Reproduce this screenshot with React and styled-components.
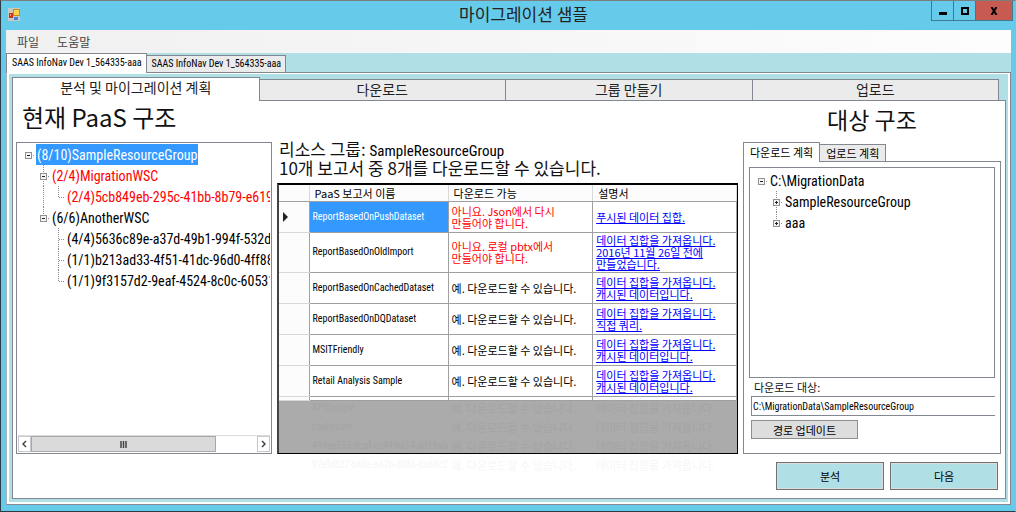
import React from 'react';
import styled, { createGlobalStyle } from 'styled-components';

const KR = '"Noto Sans CJK KR", sans-serif';
const LATIN = '"Roboto Condensed", Roboto, "Noto Sans CJK KR", sans-serif';
const POWDER = '#b0e0e6';
const LINE = '#828790';

const GlobalStyle = createGlobalStyle`
  * { box-sizing: border-box; }
  body { margin: 0; background: #fff; }
  button, input { font: inherit; color: inherit; margin: 0; padding: 0; }
  button { cursor: pointer; }
  h1, h2, p, ul { margin: 0; padding: 0; font-weight: 400; }
  ul { list-style: none; }
`;

const Frame = styled.div`
  min-height: 100vh;
  display: flex;
  flex-direction: column;
  background: #66cbea;
  border: 1px solid #2b3a44;
  border-top-color: #7d7d7d;
  border-right-color: #66cbea;
  font-family: ${KR};
  color: #222;
`;

const TitleBar = styled.header`
  display: grid;
  grid-template-columns: 1fr auto 1fr;
  height: 29px;
  padding: 0 2px 0 7px;
`;

const AppIcon = styled.svg`
  margin-top: 7px;
`;

const Title = styled.h1`
  padding: 1px 0 0 26px;
  font-size: 17px;
  line-height: 24px;
`;

const WindowButtons = styled.div`
  display: flex;
  justify-content: flex-end;
  align-items: flex-start;
`;

const WindowButton = styled.button`
  width: ${(p) => (p.$close ? 38 : 23)}px;
  height: 20px;
  border: 1px solid #3d7a8d;
  border-top: 0;
  margin-left: -1px;
  background: ${(p) => (p.$close ? '#c75b52' : 'transparent')};
  display: flex;
  align-items: center;
  justify-content: center;
`;

const Client = styled.div`
  flex: 1;
  display: flex;
  flex-direction: column;
  margin: 0 4px 6px 5px;
`;

const MenuBar = styled.nav`
  display: flex;
  gap: 18px;
  height: 23px;
  padding-left: 11px;
  background: linear-gradient(90deg, #f0f0f0, #fdfdfd);
  color: #444;
`;

const MenuItem = styled.button`
  border: 0;
  background: none;
  font-size: 12px;
  line-height: 20px;
`;

const FileTabs = styled.div`
  display: flex;
  align-items: flex-end;
  height: 19px;
  background: ${POWDER};
`;

const FileTab = styled.button`
  position: relative;
  z-index: 1;
  height: ${(p) => (p.$active ? 20 : 17)}px;
  margin-bottom: ${(p) => (p.$active ? -1 : 0)}px;
  padding: 0 4px ${(p) => (p.$active ? 2 : 0)}px 5px;
  border: 1px solid ${LINE};
  border-bottom: 0;
  border-left-width: ${(p) => (p.$active ? 1 : 0)}px;
  background: ${(p) => (p.$active ? '#fff' : '#ebebeb')};
  font-family: ${LATIN};
  font-size: 10px;
  line-height: 16px;
  color: #000;
  white-space: nowrap;
`;

const FilePane = styled.div`
  flex: 1;
  display: flex;
  flex-direction: column;
  border: 1px solid ${LINE};
  border-left-color: #a9b4ba;
  padding: 1px 2px 2px;
  background: #fff;
`;

const Inset = styled.div`
  flex: 1;
  display: flex;
  flex-direction: column;
  padding: 3px 2px 3px 3px;
  background: ${POWDER};
`;

const StepTabs = styled.div`
  display: flex;
  align-items: flex-end;
  height: 23px;
  padding-right: 7px;
`;

const StepTab = styled.button`
  position: relative;
  z-index: 1;
  flex: 1;
  height: ${(p) => (p.$active ? 24 : 21)}px;
  margin-bottom: ${(p) => (p.$active ? -1 : 0)}px;
  padding-bottom: ${(p) => (p.$active ? 6 : 2)}px;
  border: 1px solid ${LINE};
  border-bottom: 0;
  border-left-width: ${(p) => (p.$active ? 1 : 0)}px;
  background: ${(p) => (p.$active ? '#fff' : '#ebebeb')};
  font-size: 14px;
  line-height: 18px;
`;

const StepPane = styled.main`
  flex: 1;
  display: flex;
  flex-direction: column;
  padding: 0 4px 8px 3px;
  border: 1px solid ${LINE};
  background: #fff;
`;

const Columns = styled.div`
  flex: 1;
  display: grid;
  grid-template-columns: minmax(0, 256fr) minmax(0, 461fr) minmax(0, 258fr);
  gap: 5px;
`;

const Column = styled.section`
  display: flex;
  flex-direction: column;
  min-width: 0;
`;

const Heading = styled.h2`
  height: 41px;
  padding-left: ${(p) => (p.$center ? 0 : 6)}px;
  padding-top: ${(p) => (p.$center ? 3 : 0)}px;
  font-size: ${(p) => (p.$center ? 23 : 24)}px;
  line-height: 31px;
  text-align: ${(p) => (p.$center ? 'center' : 'left')};
  white-space: nowrap;
  color: #111;
`;

const TreeBox = styled.div`
  flex: 1;
  display: flex;
  flex-direction: column;
  justify-content: space-between;
  min-height: 211px;
  border: 1px solid ${LINE};
  padding: 1px;
  background: #fff;
`;

const TreeList = styled.ul`
  overflow: hidden;
  padding-left: 3px;
  padding-top: ${(p) => p.$top || 0}px;
`;

const TreeRow = styled.li`
  display: flex;
  height: 21px;
  font-family: ${LATIN};
  font-size: 14px;
  line-height: 22px;
  white-space: nowrap;
  color: ${(p) => (p.$alert ? '#f00' : '#000')};
`;

const TreeLabel = styled.span`
  padding: 0 1px;
  background: ${(p) => (p.$selected ? '#3399ff' : 'transparent')};
  color: ${(p) => (p.$selected ? '#fff' : 'inherit')};
`;

const Toggle = styled.button`
  display: flex;
  border: 0;
  background: none;
`;

const Guide = styled.svg`
  flex: none;
  display: block;
`;

const ScrollBar = styled.div`
  display: flex;
  height: 17px;
  border-top: 1px solid #dcdcdc;
`;

const ScrollArrow = styled.button`
  width: 13px;
  border: 1px solid #c8c8c8;
  background: #fff;
  display: flex;
  align-items: center;
  justify-content: center;
`;

const ScrollTrack = styled.div`
  flex: 1;
  display: flex;
  background: #fff;
`;

const ScrollThumb = styled.div`
  width: 82%;
  border: 1px solid #a8a8a8;
  background: #dadada;
  display: flex;
  align-items: center;
  justify-content: center;
`;

const Summary = styled.div`
  padding: 38px 0 6px 2px;
  font-size: 17px;
  line-height: 19px;
  white-space: nowrap;
  color: #111;
`;

const SummaryLine = styled.p`
  height: 19px;
`;

const GroupName = styled.span`
  font-family: ${LATIN};
  font-size: 15px;
  line-height: 16px;
  color: #000;
`;

const GridBox = styled.div`
  flex: 1;
  display: flex;
  flex-direction: column;
  border: 1px solid #000;
  border-width: 2px 1px 1px 2px;
  border-left-color: #444;
  background: #ababab;
`;

const ReportTable = styled.table`
  width: 100%;
  table-layout: fixed;
  border-collapse: collapse;
  background: #fff;
  font-size: 11px;
  line-height: 12px;
  color: #000;
`;

const HeadCell = styled.th`
  height: 16px;
  padding: 0 0 0 5px;
  border-right: 1px solid #d8d8d8;
  border-bottom: 1px solid #a0a0a0;
  background: #fcfcfc;
  font-weight: 400;
  text-align: left;
`;

const RowHead = styled.td`
  padding: 0 0 0 4px;
  border-right: 1px solid #a0a0a0;
  border-bottom: 1px solid #d8d8d8;
  background: #fcfcfc;
`;

const Cell = styled.td`
  height: ${(p) => p.$height || 31}px;
  padding: 0 0 0 3px;
  border-right: 1px solid #a0a0a0;
  border-bottom: 1px solid #a0a0a0;
  background: ${(p) => (p.$selected ? '#3399ff' : '#fff')};
  color: ${(p) => (p.$selected ? '#fff' : p.$alert ? '#f00' : '#000')};
  font-family: ${(p) => (p.$latin ? LATIN : KR)};
  font-size: ${(p) => (p.$latin ? 10 : 11)}px;
  white-space: pre-line;
`;

const ReportLink = styled.a`
  color: #00f;
  text-decoration: underline;
`;

const FadedArea = styled.div`
  flex: 1 1 51px;
  min-height: 51px;
  height: 51px;
`;

const FadedTable = styled.table`
  width: 100%;
  table-layout: fixed;
  border-collapse: collapse;
  font-size: 11px;
  line-height: 12px;
`;

const FadedCell = styled.td`
  height: 19px;
  padding: 0 0 5px 3px;
  overflow: hidden;
  white-space: nowrap;
  font-family: ${(p) => (p.$latin ? LATIN : KR)};
  font-size: ${(p) => (p.$latin ? 10 : 11)}px;
  color: ${(p) => (p.$outside ? '#f6f6f6' : '#a4a4a4')};
`;

const PlanTabs = styled.div`
  display: flex;
  align-items: flex-end;
  height: 19px;
`;

const PlanTab = styled(FileTab)`
  padding-left: 6px;
  padding-right: 6px;
  font-family: ${KR};
  font-size: 11px;
`;

const PlanPane = styled.div`
  flex: 1;
  display: flex;
  flex-direction: column;
  align-items: stretch;
  padding: 5px 5px 14px;
  border: 1px solid ${LINE};
`;

const PathLabel = styled.label`
  padding: 1px 0 0 5px;
  font-size: 11px;
  line-height: 17px;
  color: #111;
`;

const PathInput = styled.input`
  height: 20px;
  margin-left: 2px;
  padding: 0 1px;
  border: 1px solid ${LINE};
  border-right: 0;
  border-radius: 0;
  outline: 0;
  background: #fff;
  font-family: ${LATIN};
  font-size: 10px;
  color: #000;
`;

const UpdateButton = styled.button`
  align-self: flex-start;
  width: 107px;
  height: 19px;
  margin: 4px 0 0 2px;
  border: 1px solid #8e8e8e;
  background: #ddd;
  font-size: 11px;
  line-height: 16px;
  color: #000;
`;

const Actions = styled.footer`
  display: flex;
  justify-content: flex-end;
  gap: 6px;
  padding: 8px 3px 0 0;
`;

const ActionButton = styled.button`
  width: 108px;
  height: 28px;
  border: 1px solid #707070;
  box-shadow: inset 0 0 0 1px #dcdcdc;
  background: ${POWDER};
  font-size: 11px;
  line-height: 16px;
  color: #000;
`;

const treeLine = { stroke: '#8a8a8a', strokeDasharray: '1 1' };

function TreeCell({ kind }) {
  const box = kind.includes('minus') || kind.includes('plus');
  const up = kind.includes('up');
  const down = kind.includes('down');
  const across = kind.includes('across');
  const art = (
    <Guide width="15" height="21" viewBox="0 0 15 21" shapeRendering="crispEdges">
      {up && <path d="M7.5 0V11" {...treeLine} />}
      {down && <path d="M7.5 10V21" {...treeLine} />}
      {across && <path d="M8 11.5H14" {...treeLine} />}
      {box && <rect x="4.5" y="8.5" width="6" height="6" fill="#f4f4f4" stroke="#919191" />}
      {box && <path d="M6 11.5H9" stroke="#222" />}
      {kind.includes('plus') && <path d="M7.5 10V13" stroke="#222" />}
    </Guide>
  );
  return box ? <Toggle aria-label={kind.includes('plus') ? 'expand' : 'collapse'}>{art}</Toggle> : art;
}

function Tree({ rows, top }) {
  return (
    <TreeList $top={top}>
      {rows.map((row) => (
        <TreeRow key={row.label} $alert={row.alert}>
          {row.cells.map((kind, i) => <TreeCell key={i} kind={kind} />)}
          <TreeLabel $selected={row.selected}>{row.label}</TreeLabel>
        </TreeRow>
      ))}
    </TreeList>
  );
}

const sourceRows = [
  { cells: ['minus across'], label: '(8/10)SampleResourceGroup', selected: true },
  { cells: ['', 'up down across minus'], label: '(2/4)MigrationWSC', alert: true },
  { cells: ['', 'up down', 'up across'], label: '(2/4)5cb849eb-295c-41bb-8b79-e619', alert: true },
  { cells: ['', 'up across minus'], label: '(6/6)AnotherWSC' },
  { cells: ['', '', 'up down across'], label: '(4/4)5636c89e-a37d-49b1-994f-532d' },
  { cells: ['', '', 'up down across'], label: '(1/1)b213ad33-4f51-41dc-96d0-4ff88' },
  { cells: ['', '', 'up across'], label: '(1/1)9f3157d2-9eaf-4524-8c0c-60531' },
];

const targetRows = [
  { cells: ['minus across'], label: 'C:\\MigrationData' },
  { cells: ['', 'up down across plus'], label: 'SampleResourceGroup' },
  { cells: ['', 'up across plus'], label: 'aaa' },
];

const YES = '예. 다운로드할 수 있습니다.';
const CACHED = '데이터 집합을 가져옵니다.\n캐시된 데이터입니다.';

const reports = [
  { name: 'ReportBasedOnPushDataset', can: '아니요. Json에서 다시\n만들어야 합니다.', alert: true, note: '푸시된 데이터 집합.', selected: true },
  { name: 'ReportBasedOnOldImport', can: '아니요. 로컬 pbtx에서\n만들어야 합니다.', alert: true, note: '데이터 집합을 가져옵니다.\n2016년 11월 26일 전에\n만들었습니다.', height: 40 },
  { name: 'ReportBasedOnCachedDataset', can: YES, note: CACHED },
  { name: 'ReportBasedOnDQDataset', can: YES, note: '데이터 집합을 가져옵니다.\n직접 쿼리.' },
  { name: 'MSITFriendly', can: YES, note: CACHED },
  { name: 'Retail Analysis Sample', can: YES, note: CACHED },
];

const fadedReports = ['KPISample', 'paybydate', '494ae555-dcaf-ec49-ba14-ad99a0ef', '97efd827-b48e-a47b-8086-0ad4c27'];

function ReportColumns() {
  return (
    <colgroup>
      <col style={{ width: '30px' }} />
      <col style={{ width: '30.4%' }} />
      <col style={{ width: '31.6%' }} />
      <col />
    </colgroup>
  );
}

function Reports() {
  return (
    <GridBox>
      <ReportTable>
        <ReportColumns />
        <thead>
          <tr>
            <HeadCell />
            <HeadCell>PaaS 보고서 이름</HeadCell>
            <HeadCell>다운로드 가능</HeadCell>
            <HeadCell>설명서</HeadCell>
          </tr>
        </thead>
        <tbody>
          {reports.map((r) => (
            <tr key={r.name}>
              <RowHead>
                {r.selected && (
                  <svg width="5" height="10" viewBox="0 0 5 10" aria-hidden="true">
                    <path d="M0 0L5 5L0 10Z" fill="#222" />
                  </svg>
                )}
              </RowHead>
              <Cell $latin $selected={r.selected} $height={r.height}>{r.name}</Cell>
              <Cell $alert={r.alert}>{r.can}</Cell>
              <Cell><ReportLink href="#">{r.note}</ReportLink></Cell>
            </tr>
          ))}
          <tr>
            <RowHead />
            <Cell $height={4} />
            <Cell $height={4} />
            <Cell $height={4} />
          </tr>
        </tbody>
      </ReportTable>
      <FadedArea>
        <FadedTable>
          <ReportColumns />
          <tbody>
            {fadedReports.map((name, i) => (
              <tr key={name}>
                <FadedCell />
                <FadedCell $latin $outside={i === 3}>{name}</FadedCell>
                <FadedCell $outside={i === 3}>{YES}</FadedCell>
                <FadedCell $outside={i === 3}>데이터 집합을 가져옵니다.</FadedCell>
              </tr>
            ))}
          </tbody>
        </FadedTable>
      </FadedArea>
    </GridBox>
  );
}

export default function App() {
  return (
    <>
      <GlobalStyle />
      <Frame>
        <TitleBar>
          <AppIcon width="13" height="14" viewBox="0 0 13 14" aria-hidden="true">
            <rect width="12" height="13" fill="#c9c9c4" />
            <rect x="5.5" y="1.5" width="6" height="6" fill="#fbd24a" stroke="#c98d14" />
            <rect x="1" y="5" width="4" height="5" fill="#c8301c" />
            <rect x="2" y="6" width="1" height="2" fill="#f3a090" />
            <rect x="6" y="9" width="4" height="3" fill="#3f7fe0" />
          </AppIcon>
          <Title>마이그레이션 샘플</Title>
          <WindowButtons>
            <WindowButton aria-label="minimize">
              <svg width="9" height="9" viewBox="0 0 9 9"><path d="M1 6H9V9H1Z" fill="#000" /></svg>
            </WindowButton>
            <WindowButton aria-label="maximize">
              <svg width="8" height="8" viewBox="0 0 8 8"><rect x="1" y="1" width="6" height="6" fill="none" stroke="#000" strokeWidth="2" /></svg>
            </WindowButton>
            <WindowButton $close aria-label="close">
              <svg width="8" height="8" viewBox="0 0 8 8"><path d="M1.500 0L6.500 8M6.500 0L1.500 8" stroke="#000" strokeWidth="2" /></svg>
            </WindowButton>
          </WindowButtons>
        </TitleBar>
        <Client>
          <MenuBar>
            <MenuItem>파일</MenuItem>
            <MenuItem>도움말</MenuItem>
          </MenuBar>
          <FileTabs>
            <FileTab $active>SAAS InfoNav Dev 1_564335-aaa</FileTab>
            <FileTab>SAAS InfoNav Dev 1_564335-aaa</FileTab>
          </FileTabs>
          <FilePane>
            <Inset>
              <StepTabs>
                <StepTab $active>분석 및 마이그레이션 계획</StepTab>
                <StepTab>다운로드</StepTab>
                <StepTab>그룹 만들기</StepTab>
                <StepTab>업로드</StepTab>
              </StepTabs>
              <StepPane>
                <Columns>
                  <Column>
                    <Heading>현재 PaaS 구조</Heading>
                    <TreeBox>
                      <Tree rows={sourceRows} />
                      <ScrollBar>
                        <ScrollArrow aria-label="scroll left">
                          <svg width="5" height="8" viewBox="0 0 5 8"><path d="M4 1L1 4L4 7" fill="none" stroke="#444" strokeWidth="1.5" /></svg>
                        </ScrollArrow>
                        <ScrollTrack>
                          <ScrollThumb>
                            <svg width="7" height="7" viewBox="0 0 7 7"><path d="M1 0V7M3.500 0V7M6 0V7" stroke="#444" strokeWidth="1.5" /></svg>
                          </ScrollThumb>
                        </ScrollTrack>
                        <ScrollArrow aria-label="scroll right">
                          <svg width="5" height="8" viewBox="0 0 5 8"><path d="M1 1L4 4L1 7" fill="none" stroke="#444" strokeWidth="1.5" /></svg>
                        </ScrollArrow>
                      </ScrollBar>
                    </TreeBox>
                  </Column>
                  <Column>
                    <Summary>
                      <SummaryLine>리소스 그룹: <GroupName>SampleResourceGroup</GroupName></SummaryLine>
                      <SummaryLine>10개 보고서 중 8개를 다운로드할 수 있습니다.</SummaryLine>
                    </Summary>
                    <Reports />
                  </Column>
                  <Column>
                    <Heading $center>대상 구조</Heading>
                    <PlanTabs>
                      <PlanTab $active>다운로드 계획</PlanTab>
                      <PlanTab>업로드 계획</PlanTab>
                    </PlanTabs>
                    <PlanPane>
                      <TreeBox>
                        <Tree rows={targetRows} top={1} />
                      </TreeBox>
                      <PathLabel htmlFor="target-path">다운로드 대상:</PathLabel>
                      <PathInput id="target-path" defaultValue="C:\MigrationData\SampleResourceGroup" />
                      <UpdateButton>경로 업데이트</UpdateButton>
                    </PlanPane>
                  </Column>
                </Columns>
                <Actions>
                  <ActionButton>분석</ActionButton>
                  <ActionButton>다음</ActionButton>
                </Actions>
              </StepPane>
            </Inset>
          </FilePane>
        </Client>
      </Frame>
    </>
  );
}
